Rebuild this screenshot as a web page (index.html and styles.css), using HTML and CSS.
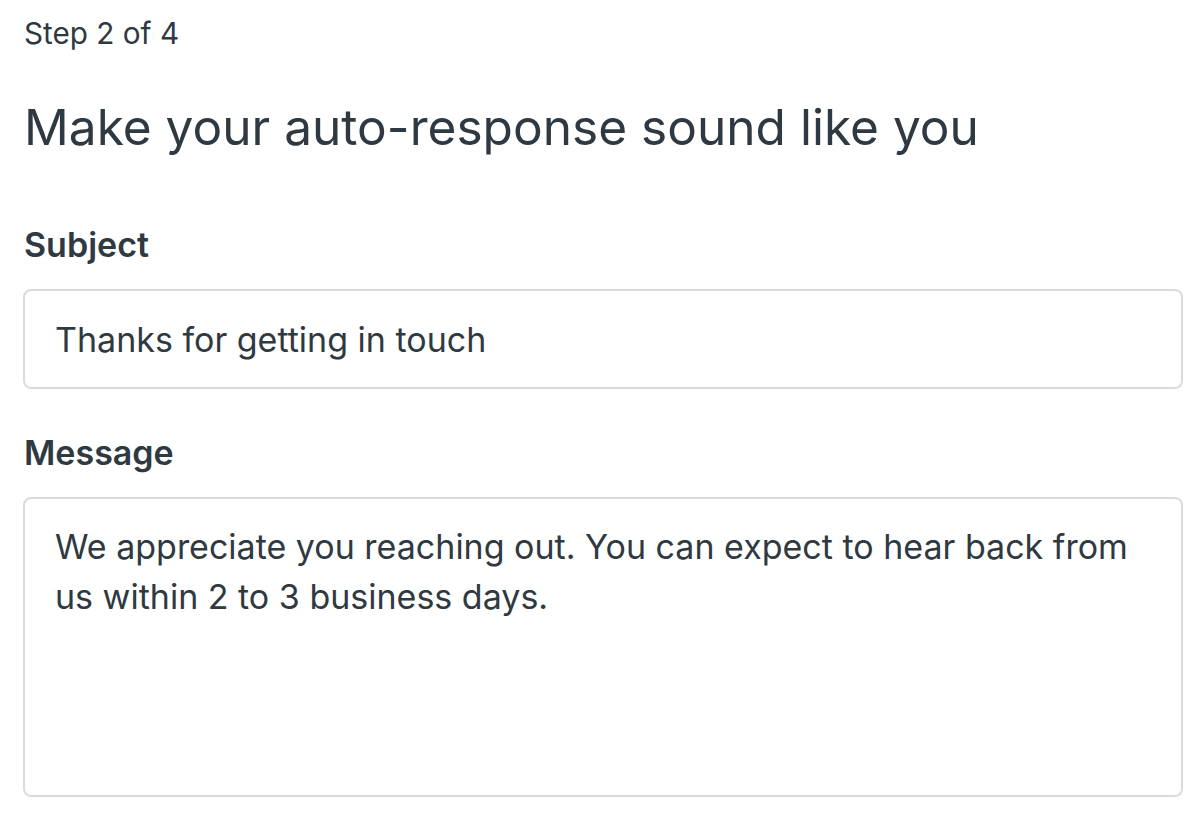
FILE: index.html
```html
<!DOCTYPE html>
<html lang="en">
<head>
<meta charset="utf-8">
<title>Auto-response</title>
<link rel="stylesheet" href="styles.css">
</head>
<body>
<main class="page">
  <p class="step">Step 2 of 4</p>
  <h1 class="title">Make your auto-response sound like you</h1>
  <div class="field field-subject">
    <label class="label" for="subject">Subject</label>
    <div class="input" id="subject">Thanks for getting in touch</div>
  </div>
  <div class="field field-message">
    <label class="label" for="message">Message</label>
    <div class="textarea" id="message">We appreciate you reaching out. You can expect to hear back from us within 2 to 3 business days.</div>
  </div>
</main>
</body>
</html>
```
FILE: styles.css
```css
html, body {
  margin: 0;
  padding: 0;
  background: #ffffff;
}
body {
  font-family: Inter, Roboto, "Noto Sans", "Liberation Sans", sans-serif;
  color: #2f3941;
}
.page {
  display: flex;
  flex-direction: column;
  padding: 13px 13px 0 23px;
}
.step {
  margin: 0 0 0 1px;
  font-size: 29.7px;
  line-height: 40px;
  font-weight: 400;
}
.title {
  margin: 42px 0 0 1px;
  font-size: 49.6px;
  line-height: 64px;
  font-weight: 400;
}
.field {
  display: flex;
  flex-direction: column;
  gap: 24px;
}
.field-subject { margin-top: 66px; }
.field-message { margin-top: 44px; }
.label {
  margin-left: 1px;
  font-size: 34px;
  line-height: 40px;
  font-weight: 600;
}
.input, .textarea {
  border: 2px solid #d8dcde;
  border-radius: 8px;
  font-size: 34px;
  padding: 0 30px;
}
.input {
  line-height: 40px;
  padding-top: 29px;
  padding-bottom: 27px;
}
.textarea {
  line-height: 50px;
  padding-top: 23px;
  height: 273px;
}
```
